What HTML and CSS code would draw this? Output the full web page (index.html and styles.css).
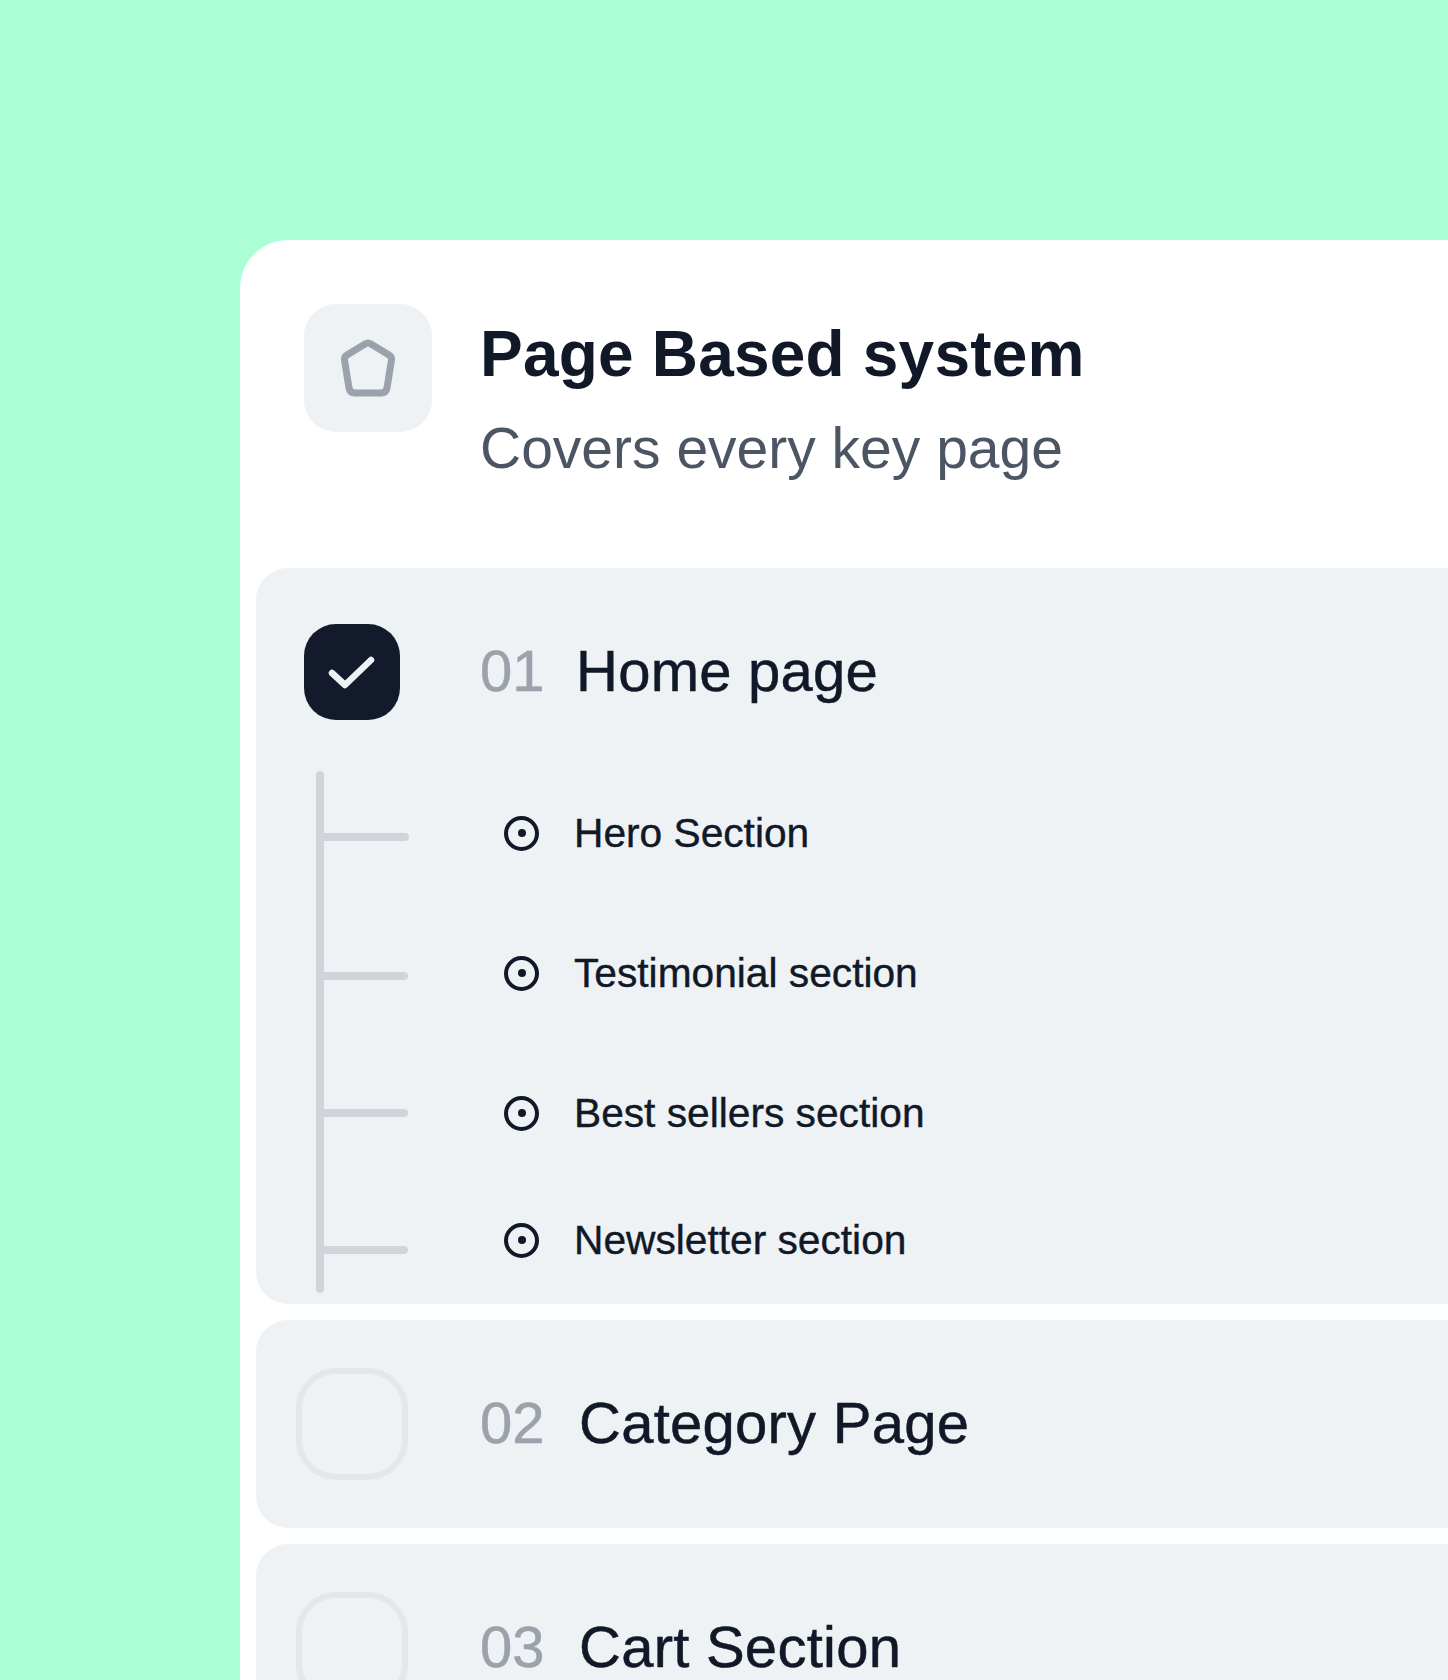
FILE: index.html
```html
<!DOCTYPE html>
<html lang="en">
<head>
  <meta charset="UTF-8" />
  <title>Page Based system</title>
  <link rel="stylesheet" href="styles.css">
</head>
<body>
  <div class="card">
    <div class="header">
      <div class="header-icon">
        <svg width="128" height="128" viewBox="0 0 128 128" fill="none" stroke="#9ba2ab" stroke-width="7">
          <path d="M61 40Q64 38 67 40L85 51Q88 53 87.5 56L83 84Q82 89 77 89L51 89Q46 89 45 84L40.5 56Q40 53 43 51Z" />
        </svg>
      </div>
      <div>
        <h1>Page Based system</h1>
        <p class="subtitle">Covers every key page</p>
      </div>
    </div>

    <div class="item item-open">
      <div class="item-head">
        <div class="check check-done">
          <svg width="96" height="96" viewBox="0 0 96 96" fill="none" stroke="#eef2f5" stroke-width="6.5" stroke-linecap="round" stroke-linejoin="round">
            <path d="M28 49L41 61L67 36" />
          </svg>
        </div>
        <span class="num">01</span>
        <span class="name">Home page</span>
      </div>
      <div class="item-body">
        <svg class="tree" width="96" height="522" viewBox="0 0 96 522" fill="none" stroke="#d1d5db" stroke-width="8" stroke-linecap="round">
          <path d="M4 4V518" />
          <path d="M4 66H89M4 205H88M4 342H88M4 479H88" />
        </svg>
        <ul class="sub-list">
          <li class="sub-row"><span class="dot"></span>Hero Section</li>
          <li class="sub-row"><span class="dot"></span>Testimonial section</li>
          <li class="sub-row"><span class="dot"></span>Best sellers section</li>
          <li class="sub-row"><span class="dot"></span>Newsletter section</li>
        </ul>
      </div>
    </div>

    <div class="item">
      <div class="item-head">
        <div class="check check-empty"></div>
        <span class="num">02</span>
        <span class="name">Category Page</span>
      </div>
    </div>

    <div class="item">
      <div class="item-head">
        <div class="check check-empty"></div>
        <span class="num">03</span>
        <span class="name">Cart Section</span>
      </div>
    </div>
  </div>
</body>
</html>
```

FILE: styles.css
```css
html, body {
  margin: 0;
  height: 1680px;
  overflow: hidden;
}

body {
  background: #abffd4;
  font-family: "Liberation Sans", Arial, sans-serif;
  color: #111827;
}

.card {
  width: 1400px;
  margin: 240px 0 0 240px;
  padding: 64px 16px 16px;
  background: white;
  border-radius: 48px 0 0 0;
}

.header {
  display: flex;
  gap: 48px;
  margin: 0 0 88px 48px;
}

.header-icon {
  width: 128px;
  height: 128px;
  background: #eef2f5;
  border-radius: 32px;
}

h1 {
  font-size: 64px;
  line-height: 70px;
  font-weight: bold;
  letter-spacing: 0.2px;
  margin: 15px 0 0 0;
}

.subtitle {
  font-size: 57px;
  line-height: 64px;
  color: #4b5563;
  margin: 27px 0 0 0;
}

.item {
  background: #eef2f5;
  border-radius: 32px;
  padding: 48px;
  margin-bottom: 16px;
}

.item-open {
  padding: 56px 48px 11px;
}

.item-head {
  display: flex;
  align-items: center;
}

.check {
  box-sizing: border-box;
  width: 96px;
  height: 96px;
  border-radius: 32px;
  margin-right: 80px;
  flex: none;
}

.check-done {
  background: #131a2b;
}

.check-empty {
  width: 112px;
  height: 112px;
  margin: 0 72px 0 -8px;
  border: 6px solid #e4e7ec;
  border-radius: 40px;
}

.num {
  font-size: 58px;
  color: #9ba2ab;
  -webkit-text-stroke: 0.5px #9ba2ab;
  width: 99px;
  padding-bottom: 4px;
}

.item-open .num {
  width: 96px;
}

.name {
  font-size: 58px;
  letter-spacing: 0.25px;
  -webkit-text-stroke: 0.5px #111827;
  padding-bottom: 4px;
}

.item-body {
  display: flex;
  margin-top: 51px;
  padding-left: 12px;
}

.tree {
  flex: none;
}

.sub-list {
  list-style: none;
  margin: 0 0 0 92px;
  padding: 42px 0 0 0;
}

.sub-row {
  display: flex;
  align-items: center;
  height: 40px;
  margin-bottom: 100px;
  font-size: 40.7px;
  -webkit-text-stroke: 0.4px #111827;
  gap: 35px;
}

.sub-row:nth-child(3) {
  margin-bottom: 87px;
}

.sub-row:last-child {
  margin-bottom: 0;
}

.dot {
  box-sizing: border-box;
  width: 35px;
  height: 35px;
  border: 4.5px solid #111827;
  border-radius: 50%;
  display: flex;
  align-items: center;
  justify-content: center;
}

.dot::before {
  content: "";
  width: 8px;
  height: 8px;
  background: #111827;
  border-radius: 50%;
}
```
